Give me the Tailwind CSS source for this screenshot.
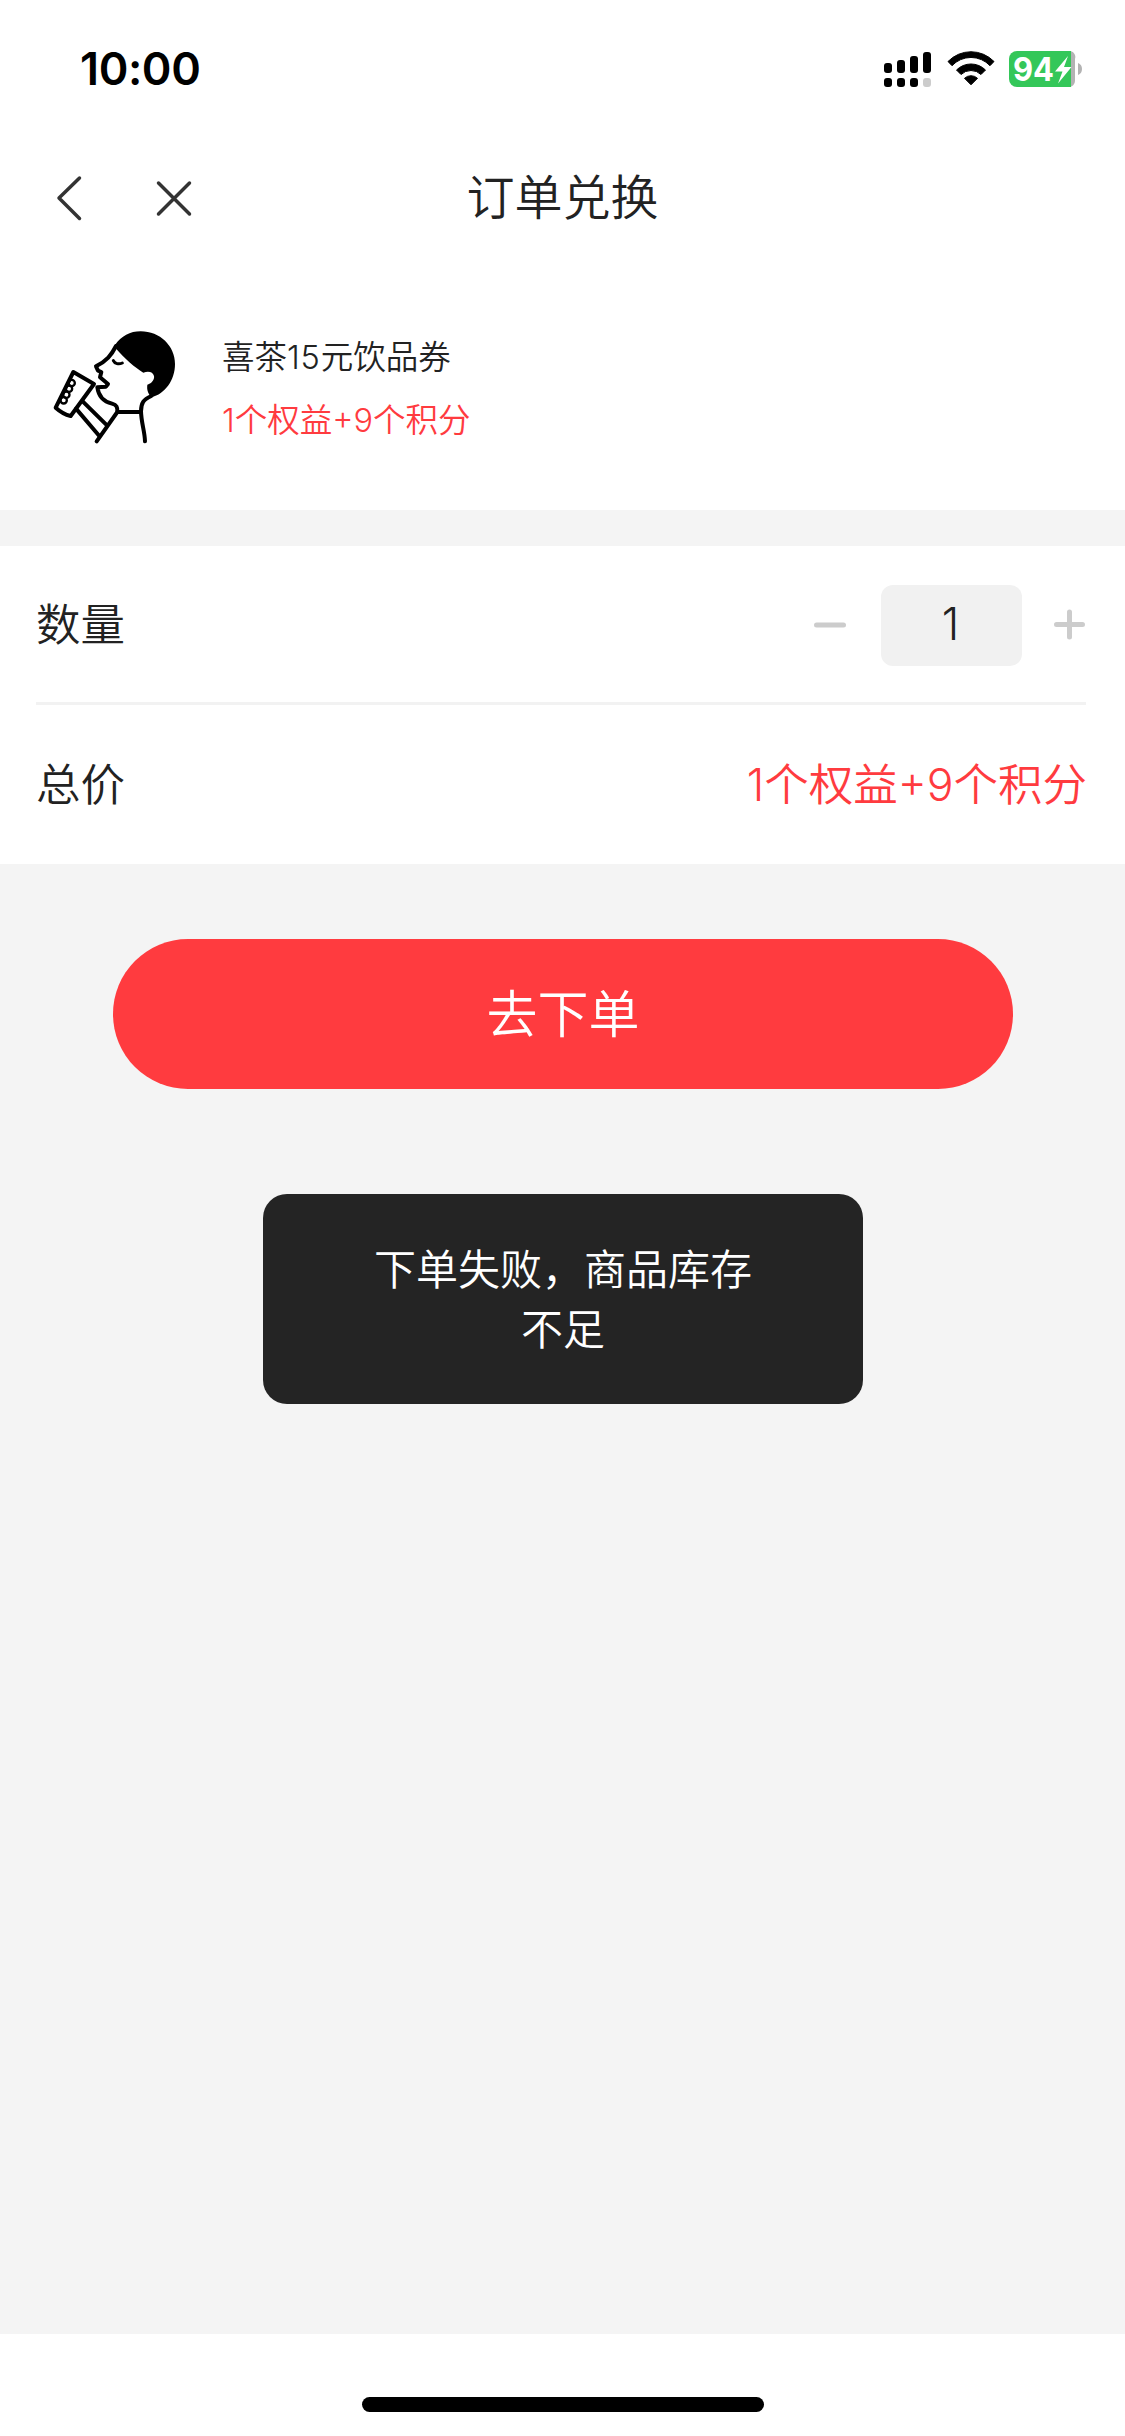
<!DOCTYPE html>
<html lang="zh-CN">

<head>
  <meta charset="utf-8">
  <title>订单兑换</title>
  <script src="https://cdn.jsdelivr.net/npm/@tailwindcss/browser@4"></script>
</head>

<body class="bg-white">
  <div class="flex h-[2436px] w-[1125px] flex-col bg-[#f4f4f4] font-['Noto_Sans_CJK_SC',sans-serif] font-[350] text-[#222]">

    <!-- status bar -->
    <div class="flex h-[132px] items-start justify-between bg-white pr-[43px] pl-[80px] text-black">
      <div class="mt-[42px] font-[Inter,sans-serif] text-[45px] leading-[54px] font-semibold tracking-[-0.4px]">10:00</div>
      <svg class="mt-[30px] h-20 w-[202px]" viewBox="0 0 202 80">
        <rect x="4" y="33" width="8" height="10" rx="3" />
        <rect x="17" y="30" width="8" height="13" rx="3" />
        <rect x="30" y="26" width="8" height="17" rx="3" />
        <rect x="43" y="22" width="8" height="21" rx="3" />
        <rect x="4" y="48" width="8" height="9" rx="3" />
        <rect x="17" y="48" width="8" height="9" rx="3" />
        <rect x="30" y="48" width="8" height="9" rx="3" />
        <rect x="43" y="48" width="8" height="9" rx="3" fill="#ccc" />
        <path d="M68 31.500a32 32 0 0 1 46 0l-4 4.200a26 26 0 0 0-38 0z" stroke="#000" stroke-width="1" stroke-linejoin="round" />
        <path d="M76.500 40a20.500 20.500 0 0 1 29 0l-4.500 4.500a14.500 14.500 0 0 0-20 0z" stroke="#000" stroke-width="1" stroke-linejoin="round" />
        <path d="M84.500 48.300a9.500 9.500 0 0 1 13 0L91 54.800z" stroke="#000" stroke-width="1" stroke-linejoin="round" />
        <path d="M137 21h52a6 6 0 0 1 6 8v22a6 6 0 0 1-6 6h-52z" fill="#b3b3b3" />
        <path d="M137 21h54v36h-54a8 8 0 0 1-8-8V29a8 8 0 0 1 8-8z" fill="#34c759" />
        <path d="M198 33a6.500 6.500 0 0 1 0 12z" fill="#b3b3b3" />
        <text x="133" y="51" class="font-[Inter,sans-serif] text-[33px] font-bold" fill="#fff" textLength="41" lengthAdjust="spacingAndGlyphs">94</text>
        <path d="M188 26L175 41.500h7.500l-4.500 12 13.500-16.500h-7.500z" fill="#fff" />
      </svg>
    </div>

    <!-- nav bar -->
    <div class="relative flex h-[132px] items-center justify-center bg-white">
      <div class="absolute left-[54px] flex gap-[68px]">
        <svg class="h-12 w-8" viewBox="0 0 32 48" fill="none" stroke="#333" stroke-width="3.500" stroke-linecap="round" stroke-linejoin="round">
          <path d="M25.500 4L5 24l20.500 20.500" />
        </svg>
        <svg class="h-12 w-10" viewBox="0 0 40 48" fill="none" stroke="#333" stroke-width="3.500" stroke-linecap="round">
          <path d="M4.500 9l31 31M35.500 9l-31 31" />
        </svg>
      </div>
      <h1 class="pb-2 text-[48px] leading-[60px]">订单兑换</h1>
    </div>

    <!-- goods -->
    <div class="flex h-[246px] bg-white pl-10">
      <svg class="mt-[46px] size-[150px]" viewBox="0 0 450 450" fill="none" stroke="#000" stroke-width="12" stroke-linecap="round" stroke-linejoin="round">
        <path d="M225 105C244 78 270 64 302 64C360 64 405 108 405 162C405 210 375 252 334 262C324 250 320 240 322 224C336 220 344 208 342 198C339 186 326 182 310 188C284 172 254 146 229 117z" fill="#000" stroke="none" />
        <path d="M228 108C214 136 200 152 168 169L174 182L184 186L180 202L204 222L198 230L172 232C176 262 194 276 216 281C230 285 233 291 232 306L170 394" />
        <path d="M232 306H302M334 258C310 268 303 280 303 304C304 340 314 362 315 394" />
        <path d="M220 152C224 161 236 164 247 159" stroke-width="9" />
        <path d="M100 186L162 222L92 318Q68 312 47 293z" />
        <path d="M128 274L198 343M108 296L178 378" />
        <g stroke-width="7">
          <circle cx="95" cy="219" r="9.500" />
          <circle cx="87" cy="236" r="9.500" />
          <circle cx="79" cy="254" r="9.500" />
          <circle cx="71" cy="271" r="9.500" />
        </g>
      </svg>
      <div class="mt-[62px] ml-8 flex flex-col font-[Inter,'Noto_Sans_CJK_SC',sans-serif] text-[32.500px] leading-[63px]">
        <div>喜茶<span class="tracking-[0.8px]">15</span>元饮品券</div>
        <div class="text-[#ff3b3f]">1个权益+9个积分</div>
      </div>
    </div>

    <!-- order form -->
    <div class="mt-9 h-[318px] bg-white pr-[39px] pl-9 font-[Inter,'Noto_Sans_CJK_SC',sans-serif] text-[44.500px] leading-[60px]">
      <div class="flex h-[159px] items-center justify-between border-b-3 border-[#f2f2f2] pt-0.5">
        <div class="pb-px">数量</div>
        <div class="flex items-center">
          <svg class="h-8 w-9" viewBox="0 0 36 32" stroke="#ccc" stroke-width="5" stroke-linecap="round">
            <path d="M4.500 16h27" />
          </svg>
          <div class="mr-[31px] ml-[33px] flex h-[81px] w-[141px] items-center justify-center rounded-xl bg-[#f1f1f1] pr-0.5 pb-0.5">1</div>
          <svg class="h-8 w-[33px]" viewBox="0 0 33 32" stroke="#ccc" stroke-width="5" stroke-linecap="round">
            <path d="M3.500 15.500h26M16.500 3v25" />
          </svg>
        </div>
      </div>
      <div class="flex h-[159px] items-center justify-between">
        <div>总价</div>
        <div class="-mr-px text-[#ff3b3f]">1个权益+9个积分</div>
      </div>
    </div>

    <button class="mt-[75px] ml-[113px] h-[150px] w-[900px] rounded-full bg-[#ff3b3f] pb-1.5 text-[51px] leading-[60px] text-white">去下单</button>

    <!-- toast -->
    <div class="mt-[105px] ml-[263px] w-[600px] rounded-3xl bg-[#242424] px-24 pt-[43px] pb-[47px] text-center text-[42px] leading-[60px] text-white">下单失败，商品库存不足</div>

    <!-- home indicator -->
    <div class="mt-auto flex h-[102px] justify-center bg-white pt-[63px]">
      <div class="h-[15px] w-[402px] rounded-full bg-black"></div>
    </div>
  </div>
</body>

</html>
